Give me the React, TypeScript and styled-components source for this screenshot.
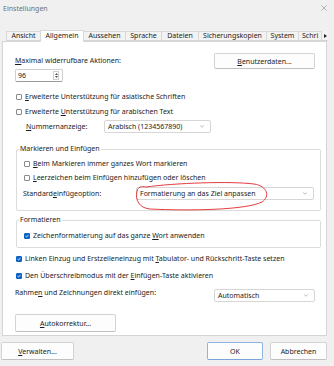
import React from "react";
import styled, { createGlobalStyle } from "styled-components";

const GlobalStyle = createGlobalStyle`
  html, body { margin: 0; padding: 0; background: #f0f0f0; }
  body {
    font-family: "Noto Sans", "Open Sans", sans-serif;
    font-size: 7px;
    color: #1c1c1c;
  }
  * { box-sizing: border-box; }
`;

const Window = styled.div`
  position: relative;
  width: 334px;
  height: 366px;
  overflow: hidden;
  background: #f0f0f0;
  display: flex;
  flex-direction: column;
`;

const TitleBar = styled.div`
  height: 20px;
  display: flex;
  justify-content: space-between;
  align-items: flex-start;
  padding: 4px 7px 0 3px;
  color: #6f6f6f;
  line-height: 10px;
`;

const CloseIcon = styled.svg`
  margin-top: 1px;
`;

const Body = styled.div`
  padding-left: 2px;
  margin-top: 9px;
`;

const TabStrip = styled.div`
  display: flex;
  align-items: flex-end;
  height: 12px;
  padding-left: 5px;
  position: relative;
  z-index: 1;
`;

const Tab = styled.div<{ $w: number; $active?: boolean; $clip?: boolean }>`
  width: ${(p) => p.$w}px;
  height: ${(p) => (p.$active ? 12 : 10)}px;
  margin-left: -1px;
  margin-bottom: ${(p) => (p.$active ? -1 : 0)}px;
  border: 1px solid #d9d9d9;
  border-bottom: ${(p) => (p.$active ? "none" : "1px solid #d5d5d5")};
  background: ${(p) => (p.$active ? "#ffffff" : "#f3f3f3")};
  line-height: ${(p) => (p.$active ? 10 : 8)}px;
  text-align: ${(p) => (p.$clip ? "left" : "center")};
  padding-left: ${(p) => (p.$clip ? 3 : 0)}px;
  white-space: nowrap;
  position: relative;
  z-index: ${(p) => (p.$active ? 2 : 1)};
`;

const TabScroll = styled.div`
  width: 6px;
  height: 10px;
  display: flex;
  align-items: center;
  justify-content: center;
  background: #f3f3f3;
  border-bottom: 1px solid #d5d5d5;
`;

const Panel = styled.div`
  width: 325px;
  height: 295px;
  border: 1px solid #d5d5d5;
  background: #ffffff;
  padding: 11px 5px 0 12px;
  display: flex;
  flex-direction: column;
`;

const TopRow = styled.div`
  display: flex;
  justify-content: space-between;
  align-items: flex-start;
  padding-right: 6px;
`;

const Column = styled.div`
  display: flex;
  flex-direction: column;
`;

const Label = styled.div<{ $h?: number; $w?: number; $shift?: number }>`
  line-height: ${(p) => p.$h ?? 9}px;
  width: ${(p) => (p.$w ? `${p.$w}px` : "auto")};
  margin-left: ${(p) => p.$shift ?? 0}px;
  white-space: nowrap;
  flex-shrink: 0;
`;

const Button = styled.button<{ $w: number; $h: number; $primary?: boolean }>`
  width: ${(p) => p.$w}px;
  height: ${(p) => p.$h}px;
  padding: 0;
  font: inherit;
  color: #1c1c1c;
  background: #fdfdfd;
  border: 1px solid ${(p) => (p.$primary ? "#8fb4e3" : "#d3d3d3")};
  border-bottom-color: ${(p) => (p.$primary ? "#7aa5dc" : "#bfbfbf")};
  border-radius: 2px;
  line-height: 1;
  flex-shrink: 0;
`;

const SpinBox = styled.div`
  width: 48px;
  height: 13px;
  border: 1px solid #cfcfcf;
  border-bottom-color: #9a9a9a;
  border-radius: 2px;
  display: flex;
  align-items: center;
  justify-content: space-between;
  padding: 0 2px 0 2px;
`;

const SpinArrows = styled.div`
  width: 6px;
  height: 9px;
  border: 1px solid #cfcfcf;
  display: flex;
  flex-direction: column;
  align-items: center;
  justify-content: space-around;
  margin-right: 1px;
`;

const CheckRow = styled.div<{ $mt: number; $inset?: number }>`
  display: flex;
  align-items: center;
  height: 11px;
  margin-top: ${(p) => p.$mt}px;
  margin-left: ${(p) => p.$inset ?? 0}px;
  gap: 3px;
  white-space: nowrap;
`;

const Box = styled.div<{ $checked?: boolean }>`
  width: 6px;
  height: 6px;
  border: 1px solid ${(p) => (p.$checked ? "#0b62c4" : "#8a8a8a")};
  border-radius: 1px;
  background: ${(p) => (p.$checked ? "#0b62c4" : "#ffffff")};
  display: flex;
  align-items: center;
  justify-content: center;
  flex-shrink: 0;
`;

const FieldRow = styled.div<{ $mt: number; $indent?: number; $align?: string; $spread?: boolean }>`
  display: flex;
  align-items: ${(p) => p.$align ?? "center"};
  justify-content: ${(p) => (p.$spread ? "space-between" : "flex-start")};
  margin-top: ${(p) => p.$mt}px;
  padding-left: ${(p) => p.$indent ?? 0}px;
  padding-right: ${(p) => (p.$spread ? 6 : 0)}px;
`;

const Select = styled.div<{ $w: number }>`
  width: ${(p) => p.$w}px;
  height: 13px;
  border: 1px solid #d6d6d6;
  border-radius: 2px;
  background: #fff;
  display: flex;
  align-items: center;
  justify-content: space-between;
  padding: 0 6px 0 3px;
  white-space: nowrap;
  flex-shrink: 0;
`;

const Group = styled.div<{ $mt: number; $h: number }>`
  position: relative;
  margin-top: ${(p) => p.$mt}px;
  margin-left: 1px;
  height: ${(p) => p.$h}px;
  border: 1px solid #dcdcdc;
  border-radius: 2px;
  padding: 8px 5px 0 7px;
  display: flex;
  flex-direction: column;
`;

const Legend = styled.div`
  position: absolute;
  top: -6px;
  left: 2px;
  padding: 0 1px;
  background: #fff;
  line-height: 9px;
`;

const Footer = styled.div`
  display: flex;
  align-items: center;
  margin-top: 6px;
  padding: 0 7px 0 1px;
  gap: 7px;
`;

const Spacer = styled.div`
  flex: 1;
`;

const Annotation = styled.svg`
  position: absolute;
  left: 0;
  top: 0;
  pointer-events: none;
`;

const Chevron = () => (
  <svg width="4" height="3" viewBox="0 0 4 3">
    <path d="M0.3 0.6 L2 2.2 L3.7 0.6" fill="none" stroke="#8a8a8a" strokeWidth="0.6" />
  </svg>
);

const Check = ({ checked, children, mt, inset }: { checked?: boolean; children: React.ReactNode; mt: number; inset?: number }) => (
  <CheckRow $mt={mt} $inset={inset}>
    <Box $checked={checked}>
      {checked && (
        <svg width="4" height="4" viewBox="0 0 4 4">
          <path d="M0.5 2 L1.6 3 L3.5 0.8" fill="none" stroke="#fff" strokeWidth="0.8" />
        </svg>
      )}
    </Box>
    <span>{children}</span>
  </CheckRow>
);

const tabs: { label: string; w: number; active?: boolean; clip?: boolean }[] = [
  { label: "Ansicht", w: 35 },
  { label: "Allgemein", w: 44, active: true },
  { label: "Aussehen", w: 43 },
  { label: "Sprache", w: 37 },
  { label: "Dateien", w: 38 },
  { label: "Sicherungskopien", w: 69 },
  { label: "System", w: 33 },
  { label: "Schri", w: 24, clip: true },
];

export default function App() {
  return (
    <>
      <GlobalStyle />
      <Window>
        <TitleBar>
          <span>Einstellungen</span>
          <CloseIcon width="6" height="6" viewBox="0 0 6 6">
            <path d="M0.3 0.3 L5.7 5.7 M5.7 0.3 L0.3 5.7" stroke="#8c8c8c" strokeWidth="0.6" />
          </CloseIcon>
        </TitleBar>
        <Body>
          <TabStrip>
            {tabs.map((t) => (
              <Tab key={t.label} $w={t.w} $active={t.active} $clip={t.clip}>
                {t.label}
              </Tab>
            ))}
            <TabScroll>
              <svg width="3" height="4" viewBox="0 0 3 4">
                <path d="M0 0 L3 2 L0 4 Z" fill="#222" />
              </svg>
            </TabScroll>
          </TabStrip>
          <Panel>
            <TopRow>
              <Column>
                <Label $h={16}>
                  <u>M</u>aximal widerrufbare Aktionen:
                </Label>
                <SpinBox>
                  <span>96</span>
                  <SpinArrows>
                    <svg width="3" height="2" viewBox="0 0 3 2">
                      <path d="M0 2 L1.5 0 L3 2 Z" fill="#555" />
                    </svg>
                    <svg width="3" height="2" viewBox="0 0 3 2">
                      <path d="M0 0 L1.5 2 L3 0 Z" fill="#555" />
                    </svg>
                  </SpinArrows>
                </SpinBox>
              </Column>
              <Button $w={101} $h={16}>
                <u>B</u>enutzerdaten...
              </Button>
            </TopRow>

            <Check mt={9} inset={1}>
              <u>E</u>rweiterte Unterstützung für asiatische Schriften
            </Check>
            <Check mt={4} inset={1}>
              Erweiterte <u>U</u>nterstützung für arabischen Text
            </Check>

            <FieldRow $mt={3} $indent={11}>
              <Label $w={78}>
                <u>N</u>ummernanzeige:
              </Label>
              <Select $w={107}>
                <span>Arabisch (1234567890)</span>
                <Chevron />
              </Select>
            </FieldRow>

            <Group $mt={16} $h={62}>
              <Legend>Markieren und Einfügen</Legend>
              <Check mt={0}>
                <u>B</u>eim Markieren immer ganzes Wort markieren
              </Check>
              <Check mt={3}>
                <u>L</u>eerzeichen beim Einfügen hinzufügen oder löschen
              </Check>
              <FieldRow $mt={4}>
                <Label $w={113} $shift={-1}>
                  Standard<u>e</u>infügeoption:
                </Label>
                <Select $w={178}>
                  <span>Formatierung an das Ziel anpassen</span>
                  <Chevron />
                </Select>
              </FieldRow>
            </Group>

            <Group $mt={9} $h={28}>
              <Legend>Formatieren</Legend>
              <Check mt={1} checked>
                Zeichenformatierung auf das ganze <u>W</u>ort anwenden
              </Check>
            </Group>

            <Check mt={5} inset={1} checked>
              Linken Einzug und Erstzeileneinzug mit <u>T</u>abulator- und Rückschritt-Taste setzen
            </Check>
            <Check mt={6} inset={1} checked>
              Den Überschreibmodus mit der <u>E</u>infügen-Taste aktivieren
            </Check>

            <FieldRow $mt={8} $align="flex-start" $spread>
              <Label $h={7}>
                Rahme<u>n</u> und Zeichnungen direkt einfügen:
              </Label>
              <Select $w={101}>
                <span>Automatisch</span>
                <Chevron />
              </Select>
            </FieldRow>

            <FieldRow $mt={12}>
              <Button $w={101} $h={18}>
                <u>A</u>utokorrektur...
              </Button>
            </FieldRow>
          </Panel>
        </Body>
        <Footer>
          <Button $w={73} $h={18}>
            <u>V</u>erwalten...
          </Button>
          <Spacer />
          <Button $w={56} $h={18} $primary>
            OK
          </Button>
          <Button $w={57} $h={18}>
            Abbrechen
          </Button>
        </Footer>
        <Annotation width="334" height="366" viewBox="0 0 334 366">
          <path
            d="M146 187 C175 183 230 181 254 184 C268 186 270 197 262 202 C246 210 190 211 150 209 C139 208 135 200 137 191 C138 187 141 186 146 187"
            fill="none"
            stroke="#e0262a"
            strokeWidth="0.9"
          />
        </Annotation>
      </Window>
    </>
  );
}
